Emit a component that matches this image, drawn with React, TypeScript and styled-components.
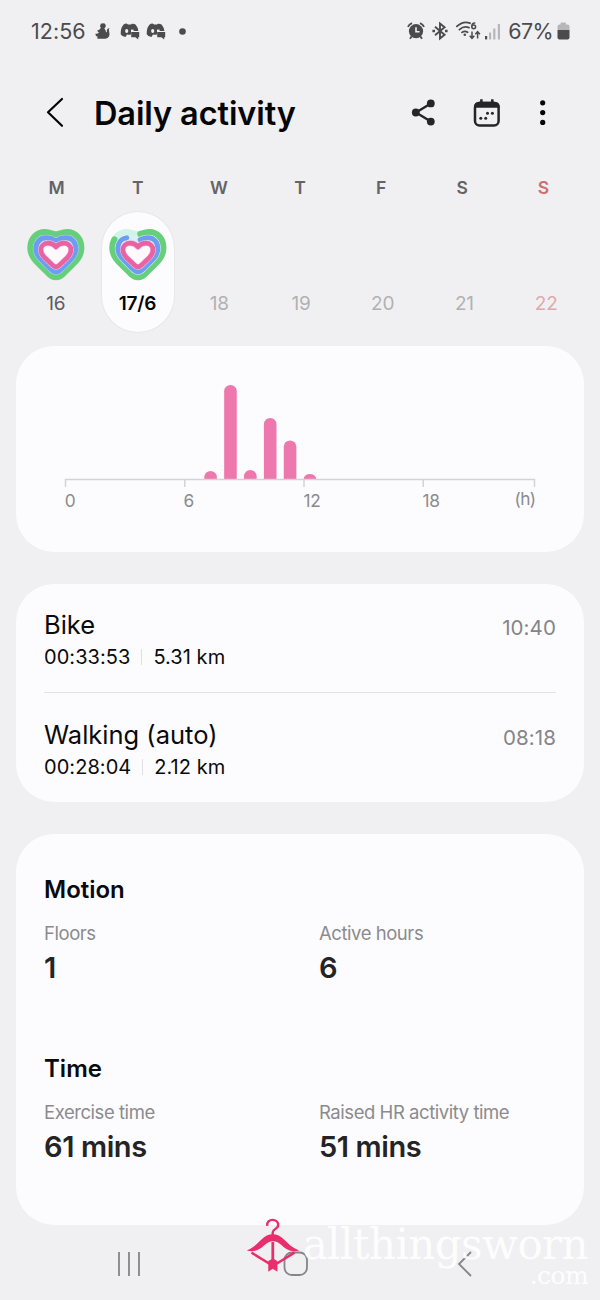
import React from 'react';
import styled, { createGlobalStyle } from 'styled-components';

const GlobalStyle = createGlobalStyle`
  * { box-sizing: border-box; }
  body { margin: 0; background: #f0f0f2; font-family: Inter, Roboto, sans-serif; color: #0a0a0c; }
  svg { display: block; flex: none; overflow: visible; }
`;

const Screen = styled.div`
  position: relative;
  width: 600px;
  height: 1300px;
  overflow: hidden;
  display: flex;
  flex-direction: column;
  background: #f0f0f2;
`;

const StatusBar = styled.header`
  display: flex;
  justify-content: space-between;
  height: 62px;
  padding: 0 30px 0 31px;
  color: #4b4b4d;
`;

const StatusGroup = styled.div`
  display: flex;
  align-items: center;
  height: 62px;
`;

const StatusText = styled.span<{ $spacing: number; $gap?: number }>`
  margin-left: ${(p) => p.$gap ?? 0}px;
  font-size: 21.5px;
  letter-spacing: ${(p) => p.$spacing}px;
`;

const StatusGlyph = styled.svg<{ $gap: number }>`
  margin-left: ${(p) => p.$gap}px;
`;

const TitleBar = styled.div`
  display: flex;
  align-items: center;
  height: 102px;
  padding: 0 54px 0 46px;
`;

const Title = styled.h1`
  margin: 2px auto 0 30px;
  font-size: 32.5px;
  font-weight: 600;
  letter-spacing: -0.1px;
  line-height: 40px;
  color: #050505;
`;

const Actions = styled.div`
  display: flex;
  align-items: center;
`;

const Weekdays = styled.div`
  display: grid;
  grid-template-columns: repeat(7, 1fr);
  height: 48px;
  padding: 12px 16px 0;
`;

const Weekday = styled.span<{ $sunday: boolean }>`
  text-align: center;
  font-size: 17.5px;
  font-weight: 600;
  line-height: 23px;
  color: ${(p) => (p.$sunday ? '#cf706d' : '#646467')};
`;

const Days = styled.div`
  display: grid;
  grid-template-columns: repeat(7, 1fr);
  height: 134px;
  padding: 0 13px 0 15px;
`;

type Tone = 'past' | 'selected' | 'future' | 'sunday';
const toneColor: Record<Tone, string> = {
  past: '#5c5c5e',
  selected: '#050505',
  future: '#b1b1b4',
  sunday: '#dfa9aa',
};

const Day = styled.div<{ $tone: Tone }>`
  display: flex;
  flex-direction: column;
  align-items: center;
  justify-content: space-between;
  justify-self: center;
  width: 72px;
  height: 120px;
  padding: 17px 0;
  border-radius: 36px;
  font-size: 19px;
  line-height: 23px;
  letter-spacing: -0.2px;
  color: ${(p) => toneColor[p.$tone]};
  font-weight: ${(p) => (p.$tone === 'selected' ? 600 : 400)};
  background: ${(p) => (p.$tone === 'selected' ? '#fcfcfe' : 'transparent')};
  box-shadow: ${(p) => (p.$tone === 'selected' ? '0 0 0 1px #e7e7e9' : 'none')};
`;

const DayLabel = styled.span`
  margin-top: auto;
`;

const Card = styled.section<{ $height: number; $pad: string }>`
  flex: none;
  height: ${(p) => p.$height}px;
  margin: 0 16px 32px;
  padding: ${(p) => p.$pad};
  border-radius: 38px;
  background: #fcfcfe;
`;

const AxisLabel = styled.text`
  font-size: 17.3px;
  fill: #8b8b8e;
`;

const Workout = styled.article`
  display: flex;
  justify-content: space-between;
  height: 108px;
  padding-top: 26px;
  & + & {
    height: 110px;
    padding-top: 27px;
    border-top: 1px solid #e3e3e5;
  }
`;

const WorkoutName = styled.div`
  height: 31px;
  font-size: 25.5px;
  line-height: 30px;
`;

const WorkoutStats = styled.div`
  display: flex;
  align-items: center;
  height: 32px;
  font-size: 20px;
  letter-spacing: 0.05px;
`;

const StatDivider = styled.i`
  width: 1px;
  height: 16px;
  margin: 0 11px;
  background: #e0e0e2;
`;

const WorkoutTime = styled.time`
  padding-top: 5px;
  font-size: 20.5px;
  line-height: 26px;
  letter-spacing: 0.1px;
  color: #858588;
`;

const MetricGroup = styled.div`
  height: 179px;
`;

const GroupTitle = styled.h2`
  margin: 0;
  height: 46px;
  font-size: 24px;
  font-weight: 600;
  line-height: 30px;
  letter-spacing: 0;
`;

const Metrics = styled.div`
  display: grid;
  grid-template-columns: 275px 1fr;
`;

const MetricLabel = styled.div`
  font-size: 18.5px;
  line-height: 24px;
  letter-spacing: -0.45px;
  white-space: nowrap;
  color: #8b8b8e;
`;

const MetricValue = styled.div`
  margin-top: 4px;
  font-size: 29px;
  font-weight: 600;
  line-height: 37px;
  letter-spacing: -0.4px;
  color: #242427;
`;

const NavBar = styled.nav`
  position: absolute;
  left: 0;
  right: 0;
  bottom: 0;
  height: 72px;
  display: flex;
  align-items: center;
  padding: 0 127px 0 117px;
  justify-content: space-between;
`;

const HomeButton = styled.svg`
  margin-right: 6px;
`;

const Watermark = styled.div`
  position: absolute;
  left: 246px;
  top: 1218px;
  width: 342px;
  display: flex;
  color: rgba(255, 255, 255, 0.88);
  font-family: 'DejaVu Serif', serif;
`;

const WatermarkText = styled.div`
  display: flex;
  flex-direction: column;
  align-items: flex-end;
  width: 288px;
  padding-top: 2px;
`;

const SiteName = styled.span`
  font-size: 42px;
  line-height: 50px;
  letter-spacing: -0.6px;
`;

const SiteSuffix = styled.span`
  font-size: 25px;
  line-height: 24px;
  letter-spacing: -0.6px;
  margin-top: -6px;
`;

const GREEN =
  'M29 5.6 C33 4.6 36 3.2 40 3.2 C49 3.2 54.3 10 54.3 19 C54.3 26 51 30.5 46 35 L37 43.9 C32 49.5 26 49.5 21 43.9 L12 35 C7 30.5 3.4 26 3.4 19 C3.4 10 9 3.2 18 3.2 C22 3.2 25 4.6 29 5.6Z';
const BLUE =
  'M29 11.8 C32.5 9.8 36 8.8 39 8.8 C45.5 8.8 48.8 14 48.8 19.8 C48.8 24.8 46.5 28 43 31.3 L34.3 39.9 C31 43.6 27 43.6 23.7 39.9 L15 31.3 C11.5 28 8.8 24.8 8.8 19.8 C8.8 14 12.5 8.8 19 8.8 C22 8.8 25.5 9.8 29 11.8Z';
const PINK =
  'M29 18 C31 15.2 34 14.1 37 14.1 C41.5 14.1 44 17.5 44 21 C44 24.3 42.4 26.6 40 29 L32 36.6 C30 38.3 28 38.3 26 36.6 L18 29 C15.6 26.6 13.8 24.3 13.8 21 C13.8 17.5 16.5 14.1 21 14.1 C24 14.1 27 15.2 29 18Z';

function ActivityHeart({ partial }: { partial: boolean }) {
  return (
    <svg width="58" height="52" viewBox="0 0 58 52" fill="none" strokeLinecap="round" strokeLinejoin="round">
      <path d={GREEN} fill="#fdf9fd" stroke={partial ? '#d2f4e8' : '#65d079'} strokeWidth="6.2" />
      {partial && (
        <path d={GREEN} stroke="#65d079" strokeWidth="6.2" pathLength="100" strokeDasharray="81 100" strokeDashoffset="-1.5" />
      )}
      <path d={BLUE} stroke={partial ? '#d8f0f5' : '#abd2f4'} strokeWidth="6" />
      <path
        d={BLUE}
        stroke="#6d9df2"
        strokeWidth="5"
        pathLength="100"
        strokeDasharray={partial ? '88 100' : '100 0'}
        strokeDashoffset={partial ? '-2' : '0'}
      />
      <path d={PINK} stroke="#efc4e5" strokeWidth="5.6" />
      <path d={PINK} stroke="#e963a1" strokeWidth="4.6" />
    </svg>
  );
}

const bars = [
  { hour: 7, value: 8 },
  { hour: 8, value: 94 },
  { hour: 9, value: 9 },
  { hour: 10, value: 61 },
  { hour: 11, value: 38.5 },
  { hour: 12, value: 5 },
];

function barPath(hour: number, value: number) {
  const x = hour * 19.87 + 0.2;
  const r = Math.min(6.3, value);
  return `M${x} 94 V${94 - value + r} a6.3 ${r} 0 0 1 12.6 0 V94Z`;
}

function HourChart() {
  return (
    <svg width="470" height="130" viewBox="0 0 470 130">
      {bars.map((b) => (
        <path key={b.hour} d={barPath(b.hour, b.value)} fill="#ee78ad" />
      ))}
      <path d="M0.5 102 V94.5 H469.5 V102 M119.8 94.5 V102 M239 94.5 V102 M358.2 94.5 V102" fill="none" stroke="#d3d3d6" strokeWidth="1.5" />
      <AxisLabel x="-0.3" y="121.5">0</AxisLabel>
      <AxisLabel x="118.6" y="121.5">6</AxisLabel>
      <AxisLabel x="238.6" y="121.5" letterSpacing="-0.4">12</AxisLabel>
      <AxisLabel x="357.6" y="121.5" letterSpacing="-0.4">18</AxisLabel>
      <AxisLabel x="470.5" y="120.3" textAnchor="end" letterSpacing="-0.6">(h)</AxisLabel>
    </svg>
  );
}

const SquirrelIcon = () => (
  <StatusGlyph $gap={9} width="16" height="18" viewBox="0 0 16 18" fill="#4b4b4d">
    <path d="M6 1.5 L7.5 1.6 Q10 .4 10.8 3.4 Q10.8 5.5 9.3 6.4 Q11.3 8.2 11 10.6 Q12.6 10.2 11.8 8.2 Q12.5 6 14.4 6.3 Q13.4 8 14.3 10.2 Q15.4 15.6 10.5 16.7 H2.5 Q1.5 15.6 3 14.8 Q.2 14.4 .5 11.8 Q2.8 12 4 10.5 L2.2 9 Q2.5 7.6 4 8 L5.8 6 Q4.2 4 6 1.5Z" />
  </StatusGlyph>
);

const ChatGameIcon = ({ gap }: { gap: number }) => (
  <StatusGlyph $gap={gap} width="20" height="18" viewBox="0 0 20 18">
    <path d="M3.6 2.6 Q5.5 1.3 7 1.7 L8 2.6 H11 L12 1.7 Q14 1.4 15.8 2.8 Q18.4 6.4 18.4 9 H11 V12.5 Q8.6 12.8 7 12.6 L5.5 15 Q1.8 14.5 .7 12.3 Q.4 6.4 3.6 2.6Z" fill="#4b4b4d" />
    <ellipse cx="6.7" cy="9" rx="1.6" ry="1.9" fill="#f0f0f2" />
    <path d="M11 7.6 h2.6 v1.7 h-2.6z" fill="#f0f0f2" />
    <path d="M11.2 9.9 h8 v5.4 h-1 v2.2 l-2.8 -2.2 h-4.2z" fill="#4b4b4d" />
  </StatusGlyph>
);

const AlarmIcon = () => (
  <svg width="18" height="18" viewBox="0 0 18 18" fill="none" stroke="#4b4b4d">
    <circle cx="9" cy="9.2" r="7.1" fill="#4b4b4d" stroke="none" />
    <path d="M.9 4.8 Q2.2 2.2 5 1.1 M17.1 4.8 Q15.8 2.2 13 1.1 M4.6 14.5 L3 16.8 M13.4 14.5 L15 16.8" strokeWidth="1.8" />
    <path d="M9 5.2 V9.7 H12.5" stroke="#f0f0f2" strokeWidth="1.6" />
  </svg>
);

const BluetoothIcon = () => (
  <StatusGlyph $gap={7} width="16" height="18" viewBox="0 0 16 18" fill="none" stroke="#4b4b4d" strokeWidth="1.9">
    <path d="M3 4.8 L12.6 12.8 L8 16.6 V1.4 L12.6 5.2 L3 13.2" />
    <path d="M.4 9 H3 M13 9 H15.6" strokeWidth="2.4" />
  </StatusGlyph>
);

const WifiIcon = () => (
  <StatusGlyph $gap={8} width="25" height="20" viewBox="0 0 25 20" fill="none" stroke="#4b4b4d">
    <path d="M.8 5.4 Q7.5 -.6 14 2.2 M3.4 8.6 Q8 4.6 13 6.6 M6 11.4 Q8.7 9.4 11.6 11.2" strokeWidth="1.8" strokeLinecap="round" />
    <circle cx="8.8" cy="13.8" r="1.3" fill="#4b4b4d" stroke="none" />
    <path d="M19.3 2 Q16 1.6 15.8 5.2" strokeWidth="1.5" />
    <circle cx="17.7" cy="5.8" r="1.9" strokeWidth="1.5" />
    <path d="M16 10.5 V17 M13.7 14.8 L16 17.3 L18.3 14.8 M21.6 17.4 V11 M19.3 13.2 L21.6 10.7 L23.9 13.2" strokeWidth="1.5" />
  </StatusGlyph>
);

const SignalIcon = () => (
  <StatusGlyph $gap={4} width="16" height="17" viewBox="0 0 16 17">
    <rect x="0" y="13" width="2.2" height="3.4" fill="#4b4b4d" />
    <path d="M4 9.5h2.2v6.9H4z M8.2 5.5h2.2v10.9H8.2z M12.8 1h2.2v15.4h-2.2z" fill="#b7b7b9" />
  </StatusGlyph>
);

const BatteryIcon = () => (
  <StatusGlyph $gap={4} width="13" height="18" viewBox="0 0 13 18">
    <path d="M3.5 2.5 V1.5 Q3.5 .5 4.5 .5 H8 Q9 .5 9 1.5 V2.5 H10.5 Q12.5 2.5 12.5 4.5 V8 H.5 V4.5 Q.5 2.5 2.5 2.5Z" fill="#b7b7b9" />
    <path d="M.5 8 H12.5 V15.5 Q12.5 17.5 10.5 17.5 H2.5 Q.5 17.5 .5 15.5Z" fill="#4b4b4d" />
  </StatusGlyph>
);

const ShareIcon = () => (
  <svg width="24" height="28" viewBox="0 0 24 28" fill="#252527">
    <path d="M19.8 4.4 L5 13.5 L19.8 22.6" fill="none" stroke="#252527" strokeWidth="2.4" />
    <circle cx="19.8" cy="4.4" r="3.9" />
    <circle cx="4.8" cy="13.5" r="3.9" />
    <circle cx="19.8" cy="22.6" r="3.9" />
  </svg>
);

const CalendarIcon = () => (
  <StatusGlyph $gap={38} width="28" height="29" viewBox="0 0 28 29" fill="#252527">
    <rect x="2" y="3.9" width="23.6" height="22.6" rx="4.5" fill="none" stroke="#252527" strokeWidth="2.5" />
    <path d="M1 8.8 Q1 2.7 6 2.7 H21.8 Q26.8 2.7 26.8 8.8Z" />
    <path d="M8.4 .2 V5 M19.3 .2 V5" stroke="#252527" strokeWidth="2.5" />
    <circle cx="14.5" cy="14.3" r="1.5" />
    <circle cx="19.4" cy="14.3" r="1.5" />
    <circle cx="7.8" cy="19.3" r="1.5" />
    <circle cx="12.7" cy="19.3" r="1.5" />
  </StatusGlyph>
);

const MoreIcon = () => (
  <StatusGlyph $gap={39} width="6" height="26" viewBox="0 0 6 26" fill="#050505">
    <circle cx="2.7" cy="2.8" r="2.6" />
    <circle cx="2.7" cy="12.6" r="2.6" />
    <circle cx="2.7" cy="22.4" r="2.6" />
  </StatusGlyph>
);

const HangerBowLogo = () => (
  <svg width="54" height="55" viewBox="0 0 54 55" fill="none" stroke="#e92e6b">
    <path d="M21.2 7.8 C20.8 3.8 23.4 1.9 26.6 1.9 C30 1.9 32.2 4 32.2 7 C32.2 11.3 26.7 10.5 26.7 14.5 V18" strokeWidth="2.4" />
    <path d="M.7 32.5 C8 29.5 11 25.5 15.5 21.5 C22 14.5 31.5 14.5 38 21.5 C42.5 25.5 45.5 29.5 53.3 32.5 C45 34.5 40.5 31.5 36 27.5 C30 21.8 24 21.8 18 27.5 C13.5 31.5 9 34.5 .7 32.5Z" fill="#e92e6b" stroke="none" />
    <path d="M5.5 34.6 L23.5 45.8 M48.5 34.6 L30.5 45.8" strokeWidth="2.5" />
    <path d="M26.8 24 V44" strokeWidth="2.8" />
    <path d="M22.3 43 L26.8 40.5 L31.4 43 V53.7 L26.8 50.8 L22.3 53.7Z" fill="#e92e6b" stroke="none" />
  </svg>
);

const days: { label: string; tone: Tone }[] = [
  { label: '16', tone: 'past' },
  { label: '17/6', tone: 'selected' },
  { label: '18', tone: 'future' },
  { label: '19', tone: 'future' },
  { label: '20', tone: 'future' },
  { label: '21', tone: 'future' },
  { label: '22', tone: 'sunday' },
];

const workouts = [
  { name: 'Bike', duration: '00:33:53', distance: '5.31 km', time: '10:40' },
  { name: 'Walking (auto)', duration: '00:28:04', distance: '2.12 km', time: '08:18' },
];

const groups = [
  { title: 'Motion', metrics: [['Floors', '1'], ['Active hours', '6']] },
  { title: 'Time', metrics: [['Exercise time', '61 mins'], ['Raised HR activity time', '51 mins']] },
];

export default function App() {
  return (
    <Screen>
      <GlobalStyle />
      <StatusBar>
        <StatusGroup>
          <StatusText $spacing={0.05}>12:56</StatusText>
          <SquirrelIcon />
          <ChatGameIcon gap={9} />
          <ChatGameIcon gap={6} />
          <StatusGlyph $gap={13} width="7" height="7" viewBox="0 0 7 7">
            <circle cx="3.5" cy="3.5" r="3.3" fill="#4b4b4d" />
          </StatusGlyph>
        </StatusGroup>
        <StatusGroup>
          <AlarmIcon />
          <BluetoothIcon />
          <WifiIcon />
          <SignalIcon />
          <StatusText $spacing={-0.6} $gap={7}>67%</StatusText>
          <BatteryIcon />
        </StatusGroup>
      </StatusBar>

      <TitleBar>
        <svg width="18" height="30" viewBox="0 0 18 30" fill="none" stroke="#050505" strokeWidth="2.2" strokeLinecap="round" strokeLinejoin="round">
          <path d="M16 1 L2 14.2 L16 27.8" />
        </svg>
        <Title>Daily activity</Title>
        <Actions>
          <ShareIcon />
          <CalendarIcon />
          <MoreIcon />
        </Actions>
      </TitleBar>

      <Weekdays>
        {['M', 'T', 'W', 'T', 'F', 'S', 'S'].map((d, i) => (
          <Weekday key={i} $sunday={i === 6}>{d}</Weekday>
        ))}
      </Weekdays>
      <Days>
        {days.map((d) => (
          <Day key={d.label} $tone={d.tone}>
            {(d.tone === 'past' || d.tone === 'selected') && <ActivityHeart partial={d.tone === 'selected'} />}
            <DayLabel>{d.label}</DayLabel>
          </Day>
        ))}
      </Days>

      <Card $height={206} $pad="39px 49px 0">
        <HourChart />
      </Card>

      <Card $height={218} $pad="0 28px">
        {workouts.map((w) => (
          <Workout key={w.name}>
            <div>
              <WorkoutName>{w.name}</WorkoutName>
              <WorkoutStats>
                {w.duration}
                <StatDivider />
                {w.distance}
              </WorkoutStats>
            </div>
            <WorkoutTime>{w.time}</WorkoutTime>
          </Workout>
        ))}
      </Card>

      <Card $height={391} $pad="41px 28px 0">
        {groups.map((g) => (
          <MetricGroup key={g.title}>
            <GroupTitle>{g.title}</GroupTitle>
            <Metrics>
              {g.metrics.map(([label, value]) => (
                <div key={label}>
                  <MetricLabel>{label}</MetricLabel>
                  <MetricValue>{value}</MetricValue>
                </div>
              ))}
            </Metrics>
          </MetricGroup>
        ))}
      </Card>

      <NavBar>
        <svg width="24" height="24" viewBox="0 0 24 24" stroke="#858587" strokeWidth="1.8">
          <path d="M2 0 V24 M12 0 V24 M22 0 V24" />
        </svg>
        <HomeButton width="26" height="26" viewBox="0 0 26 26" fill="none" stroke="#858587" strokeWidth="1.8">
          <rect x="1.5" y="1.5" width="22.5" height="22.5" rx="7.5" />
        </HomeButton>
        <svg width="16" height="26" viewBox="0 0 16 26" fill="none" stroke="#858587" strokeWidth="1.8">
          <path d="M14 1 L2 13 L14 25" />
        </svg>
      </NavBar>

      <Watermark>
        <HangerBowLogo />
        <WatermarkText>
          <SiteName>allthingsworn</SiteName>
          <SiteSuffix>.com</SiteSuffix>
        </WatermarkText>
      </Watermark>
    </Screen>
  );
}
